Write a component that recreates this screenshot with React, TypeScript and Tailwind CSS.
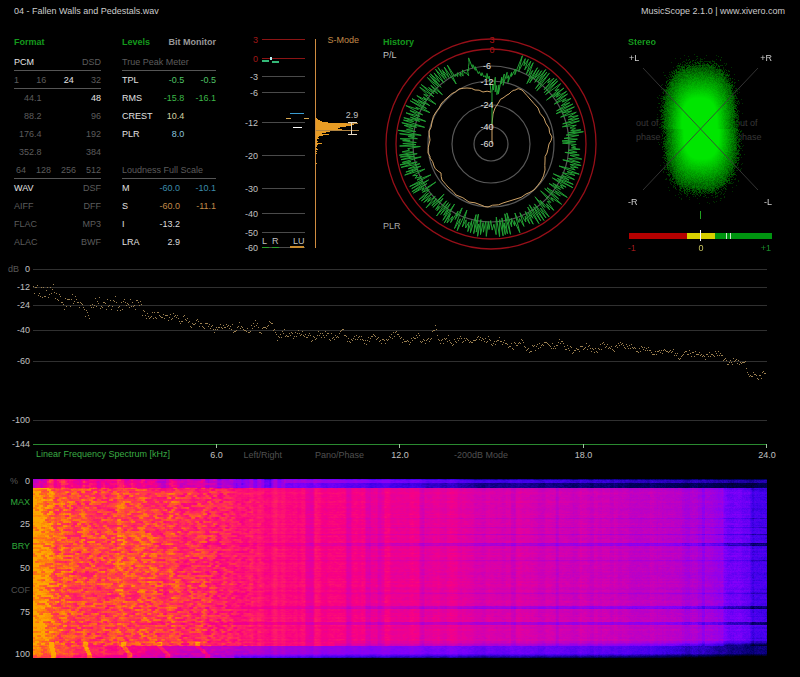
import React, { useEffect, useRef } from "react";
import clsx from "clsx";

type Point = [number, number];

// Small seeded generator so every render draws the same trace.
const createRandom = (seed: number) => () => {
  seed = (seed * 1664525 + 1013904223) >>> 0;
  return seed / 4294967296;
};

const interpolate = (points: Point[], x: number) => {
  if (x <= points[0][0]) return points[0][1];
  for (let i = 1; i < points.length; i++) {
    const [x1, y1] = points[i];
    if (x <= x1) {
      const [x0, y0] = points[i - 1];
      return y0 + ((x - x0) / (x1 - x0)) * (y1 - y0);
    }
  }
  return points[points.length - 1][1];
};

const Heading: React.FC<{ children: React.ReactNode }> = ({ children }) => (
  <h2 className="font-bold leading-[21px] text-[#149a1c]">{children}</h2>
);

/* ---------- Format ---------- */

const formatRows: { items: string[]; active?: string; className?: string }[] = [
  { items: ["PCM", "DSD"], active: "PCM", className: "border-b border-[#555]" },
  {
    items: ["1", "16", "24", "32"],
    active: "24",
    className: "border-b border-[#555]",
  },
  { items: ["44.1", "48"], active: "48", className: "pl-[10px]" },
  { items: ["88.2", "96"], className: "pl-[10px]" },
  { items: ["176.4", "192"], className: "pl-[5px]" },
  { items: ["352.8", "384"], className: "pl-[5px]" },
  {
    items: ["64", "128", "256", "512"],
    className: "pl-[2px] border-b border-[#555]",
  },
  { items: ["WAV", "DSF"], active: "WAV" },
  { items: ["AIFF", "DFF"] },
  { items: ["FLAC", "MP3"] },
  { items: ["ALAC", "BWF"] },
];

const FormatPanel = () => (
  <section className="w-[87px]">
    <Heading>Format</Heading>
    {formatRows.map((row) => (
      <div
        key={row.items[0]}
        className={clsx("flex h-[18px] justify-between", row.className)}
      >
        {row.items.map((item) => (
          <span
            key={item}
            className={clsx(
              "leading-[18px]",
              item === row.active ? "text-[#e4e4e4]" : "text-[#5c5c5c]"
            )}
          >
            {item}
          </span>
        ))}
      </div>
    ))}
  </section>
);

/* ---------- Levels ---------- */

type Level = { label: string; values: string[]; color: string };

const peakLevels: Level[] = [
  { label: "TPL", values: ["-0.5", "-0.5"], color: "text-[#4fc467]" },
  { label: "RMS", values: ["-15.8", "-16.1"], color: "text-[#3cb848]" },
  { label: "CREST", values: ["10.4", ""], color: "text-[#d2d2a0]" },
  { label: "PLR", values: ["8.0", ""], color: "text-[#8cc4dc]" },
];

const loudnessLevels: Level[] = [
  { label: "M", values: ["-60.0", "-10.1"], color: "text-[#3c8cac]" },
  { label: "S", values: ["-60.0", "-11.1"], color: "text-[#c08a48]" },
  { label: "I", values: ["-13.2", ""], color: "text-[#dcdcdc]" },
  { label: "LRA", values: ["2.9", ""], color: "text-[#dcdcdc]" },
];

const LevelTable: React.FC<{ title: string; levels: Level[] }> = ({
  title,
  levels,
}) => (
  <table className="w-full border-collapse">
    <caption className="h-[18px] border-b border-[#555] text-left leading-[18px] text-[#5c5c5c]">
      {title}
    </caption>
    <tbody>
      {levels.map(({ label, values, color }) => (
        <tr key={label} className="h-[18px] leading-[18px]">
          <th scope="row" className="p-0 text-left font-normal text-[#e0e0e0]">
            {label}
          </th>
          {values.map((value, i) => (
            <td key={i} className={clsx("w-[36px] p-0 text-right", color)}>
              {value}
            </td>
          ))}
        </tr>
      ))}
    </tbody>
  </table>
);

const LevelsPanel = () => (
  <section className="w-[94px]">
    <div className="flex justify-between">
      <Heading>Levels</Heading>
      <button
        type="button"
        className="font-bold leading-[21px] text-[#989898]"
      >
        Bit Monitor
      </button>
    </div>
    <LevelTable title="True Peak Meter" levels={peakLevels} />
    <div className="h-[18px]" />
    <LevelTable title="Loudness Full Scale" levels={loudnessLevels} />
  </section>
);

/* ---------- Meter ---------- */

const meterScale: [string, number][] = [
  ["3", 7],
  ["0", 26],
  ["-3", 44],
  ["-6", 60],
  ["-12", 90],
  ["-20", 123],
  ["-30", 156],
  ["-40", 181],
  ["-50", 200],
  ["-60", 215],
];

// One entry per pixel row, starting at y = 86.
const histogram = [
  1, 2, 4, 6, 12, 32, 38, 35, 30, 24, 22, 26, 18, 14, 10, 6, 13, 7, 3, 2, 3, 1,
  1, 2, 1, 6, 2, 1, 1, 0, 1, 2, 0, 1, 0, 1, 0, 0, 0, 0, 0, 0, 0, 0, 0, 1,
];

const MeterPanel = () => (
  <section className="grid w-[125px]">
    <svg viewBox="0 0 125 220" className="w-full [grid-area:1/1]">
      <g shapeRendering="crispEdges">
        {meterScale.map(([label, y], i) => (
          <rect
            key={label}
            x="25"
            y={y}
            width="43"
            height="1"
            fill={i < 2 ? "#8c1414" : "#4a4a4a"}
          />
        ))}
        <rect x="25" y="28" width="7" height="2" fill="#34b878" />
        <rect x="35" y="29" width="7" height="2" fill="#34b878" />
        <rect x="33" y="25" width="2" height="3" fill="#b8f0f0" />
        <rect x="53" y="81" width="14" height="1" fill="#3a9cd0" />
        <rect x="49" y="86" width="5" height="1" fill="#d8a850" />
        <rect x="67" y="86" width="5" height="1" fill="#d8a850" />
        <rect x="56" y="95" width="9" height="1" fill="#fff" />
        <rect x="25" y="215" width="7" height="1" fill="#28a028" />
        <rect x="35" y="215" width="7" height="1" fill="#28a028" />
        <rect x="53" y="214" width="14" height="2" fill="#c88c30" />
        <rect x="78" y="7" width="1" height="209" fill="#d08c40" />
        {histogram.map((width, i) => (
          <rect
            key={i}
            x="79"
            y={86 + i}
            width={width}
            height="1"
            fill="#e89c24"
          />
        ))}
        <rect x="79" y="98" width="43" height="1" fill="#b08440" />
        <rect x="110" y="91" width="11" height="1" fill="#b08440" />
        <path
          d="M110.5 90.5h9M110.5 102.5h9M114.5 90.5v12"
          stroke="#e8dcc8"
          fill="none"
        />
      </g>
      <g fontSize="9" fill="#c0c0c0">
        {meterScale.map(([label, y], i) => (
          <text
            key={label}
            x="21"
            y={y + 4}
            textAnchor="end"
            fill={i < 2 ? "#a01818" : undefined}
          >
            {label}
          </text>
        ))}
        <text x="25" y="212">L</text>
        <text x="35" y="212">R</text>
        <text x="56" y="212">LU</text>
        <text x="115" y="86" textAnchor="middle">2.9</text>
      </g>
    </svg>
    <button
      type="button"
      className="mr-[3px] h-[17px] self-start justify-self-end leading-[17px] text-[#c08848] [grid-area:1/1]"
    >
      S-Mode
    </button>
  </section>
);

/* ---------- History ---------- */

const CX = 108;
const CY = 112;

const historyRings = [
  { label: "3", r: 105, y: 8 },
  { label: "0", r: 95, y: 18 },
  { label: "-6", r: 78, y: 34 },
  { label: "-12", r: 63, y: 50 },
  { label: "-24", r: 39, y: 73 },
  { label: "-40", r: 17, y: 95 },
  { label: "-60", r: 0, y: 112 },
];

const polar = (deg: number, r: number) => {
  const a = (deg * Math.PI) / 180;
  return `${(CX + r * Math.sin(a)).toFixed(1)} ${(CY - r * Math.cos(a)).toFixed(1)}`;
};

const peakEnvelope: Point[] = [
  [0, 50],
  [2, 58],
  [8, 58],
  [12, 66],
  [16, 72],
  [19, 78],
  [20, 90],
  [25, 84],
  [90, 84],
  [130, 82],
  [180, 84],
  [230, 82],
  [243, 78],
  [250, 84],
  [300, 81],
  [328, 84],
  [334, 77],
  [342, 75],
  [344, 80],
  [345, 89],
  [347, 78],
  [353, 70],
  [359, 65],
];

const buildPeakTrace = () => {
  const random = createRandom(42);
  const points: string[] = [`M${CX + 1} 92L${CX + 1} 62`];
  let i = 0;
  for (let deg = 1; deg < 359; deg += 0.5 + random() * 0.8) {
    const swing = deg > 333 ? 4 : deg < 18 ? 9 : 14;
    const side = i++ % 2 ? 1 : -1;
    const r = interpolate(peakEnvelope, deg) + side * random() * swing;
    points.push(`L${polar(deg, Math.min(r, 94 - random() * 3))}`);
  }
  return points.join("") + `L${CX} 60`;
};

const loudnessPoints: Point[] = [
  [109, 112], [109, 92], [110, 82], [112, 76], [116, 70], [120, 66], [126, 62],
  [131, 58], [134, 57], [139, 58], [147, 67], [155, 76], [161, 86], [166, 96],
  [169, 105], [166, 112], [164, 121], [162, 129], [162, 138], [158, 149],
  [151, 158], [143, 162], [133, 167], [120, 171], [113, 173], [105, 175],
  [98, 173], [86, 170], [73, 163], [65, 155], [59, 148], [58, 141], [55, 139],
  [51, 134], [47, 126], [45, 121], [47, 108], [46, 99], [49, 90], [53, 80],
  [58, 72], [64, 66], [70, 61], [76, 57], [84, 56], [92, 58], [100, 60],
  [108, 60],
];

const buildLoudnessTrace = () => {
  const random = createRandom(9);
  return loudnessPoints
    .map(([x, y], i) => {
      if (!i) return `M${x} ${y}`;
      const [px, py] = loudnessPoints[i - 1];
      const mx = (x + px) / 2 + (i > 4 ? random() * 2 - 1 : 0);
      const my = (y + py) / 2 + (i > 4 ? random() * 2 - 1 : 0);
      return `L${mx.toFixed(1)} ${my.toFixed(1)}L${x} ${y}`;
    })
    .join("");
};

const HistoryPanel = () => (
  <section className="grid w-[224px]">
    <svg viewBox="0 0 224 220" className="w-full [grid-area:1/1]">
      {historyRings.map(({ label, r }, i) => (
        <circle
          key={label}
          cx={CX}
          cy={CY}
          r={r}
          fill="none"
          stroke={i < 2 ? "#960f18" : "#585858"}
          strokeWidth={i < 2 ? 1.3 : 1.2}
        />
      ))}
      <path
        d={buildLoudnessTrace()}
        fill="none"
        stroke="#d0a468"
        strokeLinejoin="round"
      />
      <path d={buildPeakTrace()} fill="none" stroke="#22a034" />
      <g fontSize="9" textAnchor="middle">
        {historyRings.map(({ label, y }, i) => (
          <text
            key={label}
            x={label.length > 1 ? 104 : 109}
            y={y + 3}
            fill={i < 2 ? "#b01414" : "#e0e0e0"}
          >
            {label}
          </text>
        ))}
      </g>
    </svg>
    <div className="flex flex-col items-start justify-between pb-[17px] [grid-area:1/1]">
      <div>
        <Heading>History</Heading>
        <button type="button" className="block leading-[4px] text-[#c0c0c0]">
          P/L
        </button>
      </div>
      <button type="button" className="leading-[18px] text-[#a8a8a8]">
        PLR
      </button>
    </div>
  </section>
);

/* ---------- Stereo ---------- */

const drawCloud = (canvas: HTMLCanvasElement) => {
  const ctx = canvas.getContext("2d");
  if (!ctx) return;
  const { width, height } = canvas;
  const random = createRandom(7);
  const image = ctx.createImageData(width, height);
  for (let y = 0; y < height; y++) {
    for (let x = 0; x < width; x++) {
      const dx = Math.abs(x - 72 - (y < 97 ? -1 : 1)) / 40;
      const dy = Math.abs(y - 96) / 69;
      const d = Math.pow(Math.pow(dx, 2.8) + Math.pow(dy, 2.8), 1 / 2.8);
      const density = Math.max(0, Math.min(1, (1.02 - d) / 0.58));
      const grain = density + (random() - 0.5) * 0.35 * (1 - density);
      const lit = random() < density * 4 + (d < 1.1 ? 0.06 : 0);
      const value = lit ? Math.max(0.2, Math.pow(Math.max(grain, 0), 0.7)) : 0;
      const i = (y * width + x) * 4;
      image.data[i + 1] = value * 230;
      image.data[i + 3] = lit ? 255 : d < 0.95 ? 200 : 0;
    }
  }
  ctx.putImageData(image, 0, 0);
};

const StereoPanel = () => {
  const ref = useRef<HTMLCanvasElement>(null);

  useEffect(() => {
    if (ref.current) drawCloud(ref.current);
  }, []);

  return (
    <section className="grid w-[144px]">
      <svg viewBox="0 0 144 220" className="w-full [grid-area:1/1]">
        <g fontSize="9" fill="#383838">
          <text x="8" y="94">out of</text>
          <text x="8" y="108">phase</text>
          <text x="107" y="94">out of</text>
          <text x="109" y="108">phase</text>
        </g>
      </svg>
      <canvas
        ref={ref}
        width={144}
        height={220}
        className="w-full [grid-area:1/1]"
      />
      <svg viewBox="0 0 144 220" className="w-full [grid-area:1/1]">
        <path
          d="M15 36L130 158M130 36L15 158"
          stroke="#3c3c3c"
          strokeOpacity="0.85"
        />
        <g shapeRendering="crispEdges">
          <rect x="72" y="179" width="1" height="8" fill="#20a020" />
          <rect x="1" y="201" width="58" height="6" fill="#b40000" />
          <rect x="59" y="201" width="28" height="6" fill="#d8d000" />
          <rect x="87" y="201" width="57" height="6" fill="#009410" />
          <rect x="72" y="198" width="1" height="11" fill="#fff" />
          <rect x="98" y="201" width="1" height="6" fill="#c8e8c8" />
          <rect x="102" y="201" width="1" height="6" fill="#c8e8c8" />
        </g>
        <g fontSize="9" fill="#d0d0d0">
          <text x="1" y="29">+L</text>
          <text x="144" y="29" textAnchor="end">+R</text>
          <text x="0" y="173">-R</text>
          <text x="144" y="173" textAnchor="end">-L</text>
          <text x="0" y="219" fill="#a01818">-1</text>
          <text x="73" y="219" textAnchor="middle" fill="#c8c460">0</text>
          <text x="143" y="219" textAnchor="end" fill="#188c28">+1</text>
        </g>
      </svg>
      <div className="[grid-area:1/1]">
        <Heading>Stereo</Heading>
      </div>
    </section>
  );
};

/* ---------- Frequency spectrum ---------- */

const spectrumScale: [string, number][] = [
  ["0", 7],
  ["-12", 25],
  ["-24", 43],
  ["-40", 68],
  ["-60", 99],
  ["-100", 158],
  ["-144", 182],
];

const spectrumProfile: Point[] = [
  [0, 30], [2, 23], [8, 30], [17, 30], [20, 25], [25, 38], [33, 41], [41, 36],
  [47, 45], [56, 50], [62, 39], [73, 42], [82, 40], [87, 46], [97, 38],
  [108, 46], [113, 55], [127, 51], [133, 56], [138, 54], [147, 57], [152, 56],
  [158, 65], [163, 59], [170, 63], [183, 66], [192, 64], [200, 66], [210, 63],
  [215, 69], [222, 60], [228, 70], [238, 61], [244, 75], [250, 70], [260, 72],
  [270, 70], [278, 76], [288, 71], [303, 76], [309, 66], [315, 79], [322, 75],
  [333, 79], [339, 73], [350, 80], [358, 74], [363, 71], [373, 82], [385, 73],
  [388, 80], [397, 76], [402, 66], [407, 80], [415, 76], [417, 82], [427, 76],
  [440, 80], [445, 75], [452, 79], [455, 75], [460, 82], [465, 76], [470, 80],
  [480, 84], [488, 79], [495, 88], [510, 81], [523, 84], [526, 79], [532, 84],
  [540, 89], [553, 84], [563, 88], [570, 83], [580, 88], [585, 82], [597, 84],
  [603, 88], [615, 86], [622, 92], [635, 87], [647, 95], [653, 91], [667, 91],
  [670, 95], [678, 91], [687, 91], [695, 101], [700, 99], [712, 100],
  [715, 111], [727, 115], [730, 111], [733, 113],
];

const buildSpectrum = () => {
  const random = createRandom(2024);
  let d = "";
  for (let x = 0; x < 733; x++) {
    const spread = x < 110 ? 13 : x < 300 ? 8 : 6;
    const y = interpolate(spectrumProfile, x) + (random() - 0.5) * spread;
    d += `M${x} ${Math.round(y)}.5h1`;
  }
  return d;
};

const modeButton = "text-[#505050]";

const SpectrumPanel = () => (
  <section className="mt-[10px]">
    <div className="flex">
      <svg viewBox="0 0 33 186" className="w-[33px] shrink-0">
        <g fontSize="9" fill="#c0c0c0">
          <text x="8" y="10" fill="#585858">dB</text>
          {spectrumScale.map(([label, y]) => (
            <text key={label} x="30" y={y + 3} textAnchor="end">
              {label}
            </text>
          ))}
        </g>
      </svg>
      <svg
        viewBox="0 0 734 186"
        preserveAspectRatio="none"
        className="h-[186px] min-w-0 flex-1"
        shapeRendering="crispEdges"
      >
        {spectrumScale.map(([label, y]) => (
          <rect
            key={label}
            y={y}
            width="734"
            height="1"
            fill={label === "-144" ? "#2a8a30" : "#303030"}
          />
        ))}
        {[183, 366, 550, 733].map((x) => (
          <rect key={x} x={x} y="182" width="1" height="4" fill="#a0c0a0" />
        ))}
        <path d={buildSpectrum()} stroke="#9c8050" fill="none" />
      </svg>
    </div>
    <div className="ml-[33px] grid grid-cols-4 leading-3">
      <div className="flex justify-between pl-[3px]">
        <h2 className="text-[#3aac44]">Linear Frequency Spectrum [kHz]</h2>
        <span className="translate-x-1/2 pt-px text-[#c0c0c0]">6.0</span>
      </div>
      <div className="flex justify-between pl-[27px]">
        <div className="flex gap-[33px]">
          <button type="button" className={modeButton}>
            Left/Right
          </button>
          <button type="button" className={modeButton}>
            Pano/Phase
          </button>
        </div>
        <span className="translate-x-1/2 pt-px text-[#c0c0c0]">12.0</span>
      </div>
      <div className="flex justify-between pl-[54px]">
        <button type="button" className={modeButton}>
          -200dB Mode
        </button>
        <span className="translate-x-1/2 pt-px text-[#c0c0c0]">18.0</span>
      </div>
      <div className="flex justify-end">
        <span className="translate-x-1/2 pt-px text-[#c0c0c0]">24.0</span>
      </div>
    </div>
  </section>
);

/* ---------- Spectrogram ---------- */

const heatStops: [number, number, number, number][] = [
  [0, 0, 0, 0],
  [0.12, 0, 0, 100],
  [0.26, 64, 0, 235],
  [0.38, 130, 0, 250],
  [0.5, 180, 0, 205],
  [0.6, 216, 0, 172],
  [0.7, 248, 0, 132],
  [0.78, 255, 30, 104],
  [0.86, 255, 78, 52],
  [0.93, 255, 128, 10],
  [1, 255, 168, 0],
];

const heat = (t: number): [number, number, number] => {
  const v = Math.max(0, Math.min(1, t));
  let i = 1;
  while (i < heatStops.length - 1 && v > heatStops[i][0]) i++;
  const a = heatStops[i - 1];
  const b = heatStops[i];
  const k = (v - a[0]) / (b[0] - a[0]);
  return [
    a[1] + (b[1] - a[1]) * k,
    a[2] + (b[2] - a[2]) * k,
    a[3] + (b[3] - a[3]) * k,
  ];
};

const bodyProfile: Point[] = [
  [0, 0.98], [8, 0.97], [14, 0.94], [24, 0.87], [60, 0.84], [130, 0.83],
  [170, 0.78], [220, 0.75], [270, 0.72], [330, 0.69], [400, 0.65], [470, 0.61],
  [520, 0.58], [580, 0.56], [640, 0.52], [668, 0.46], [688, 0.44],
  [690, 0.37], [715, 0.34], [718, 0.27], [733, 0.23],
];
const introProfile: Point[] = [
  [0, 0.5], [8, 0.62], [14, 0.78], [80, 0.7], [150, 0.6], [200, 0.45],
  [270, 0.36], [350, 0.28], [450, 0.17], [733, 0.08],
];
const outroProfile: Point[] = [
  [0, 0.92], [30, 0.87], [70, 0.78], [110, 0.68], [150, 0.58], [220, 0.5],
  [300, 0.42], [450, 0.35], [600, 0.3], [733, 0.12],
];

const darkColumns: Point[] = [
  [276, 5], [315, 3], [334, 3], [347, 4], [388, 3], [479, 3], [523, 2],
  [669, 2],
];
const darkRows: [number, number, number][] = [
  [39, 1, 0.06], [48, 1, 0.04], [55, 1, 0.08], [64, 3, 0.13], [81, 1, 0.05],
  [114, 1, 0.07], [127, 3, 0.15], [143, 3, 0.12],
];
// Sliding tones in the fade-out: start column, then drift per row.
const slides: Point[] = [
  [18, 0.3], [52, 0.5], [90, 0.8], [126, 1], [164, 1.2],
];

const drawSpectrogram = (canvas: HTMLCanvasElement) => {
  const ctx = canvas.getContext("2d");
  if (!ctx) return;
  const { width, height } = canvas;
  const random = createRandom(1234);
  const noise = (length: number) =>
    Array.from({ length }, () => random() - 0.5);
  const image = ctx.createImageData(width, height);
  const columns = noise(width);
  const rows = noise(height);
  // Bass content is coarser: 4x2 cells instead of single pixels.
  const cells = noise(200 * 100);

  for (let y = 0; y < height; y++) {
    for (let x = 0; x < width; x++) {
      const cell = cells[(y >> 1) * 200 + ((x + (y & 2)) >> 2)];
      const bass = x < 180 ? 1 : x < 240 ? 1 - (x - 180) / 70 : 0.14;
      const column = (columns[x - (x % 4)] + columns[x - (x % 7)]) / 2;
      let t: number;

      if (y < 9) {
        t = interpolate(introProfile, x) + cell * 0.12 * bass;
        t += column * (x < 260 ? 0.2 : 0.05);
        if (y < 4 && x > 250) t += 0.1;
        if (y === 0) t -= 0.08;
      } else if (y > 166) {
        t = interpolate(outroProfile, x) + cell * 0.1 * bass + column * 0.05;
        t -= Math.max(0, y - 174) * (x > 200 ? 0.05 : 0.02);
      } else {
        t = interpolate(bodyProfile, x) + cell * 0.17 * bass;
        t += column * (x < 20 ? 0.03 : 0.07) + rows[y] * 0.035;
        if (y > 55 && y < 116 && x > 60 && x < 130) t += 0.02;
        if (y > 161 && x > 300) t -= 0.04 * (y - 161) * (x / width);
        if (y < 11 && x > 60) t -= 0.04;
        for (const [cx, w] of darkColumns) {
          if (Math.abs(x - cx) < w) t -= 0.06;
        }
        const reach = Math.max(0, Math.min(1, (x - 100) / 350));
        for (const [ry, h, depth] of darkRows) {
          if (y >= ry && y < ry + h) t -= depth * reach;
        }
      }

      if (y > 162) {
        for (const [cx, drift] of slides) {
          const bend = cx + Math.min(8, Math.max(0, y - 167)) * drift;
          if (Math.abs(x - bend) < 2.5) t += 0.16;
        }
      }
      t += (random() - 0.5) * 0.035;

      const i = (y * width + x) * 4;
      const [r, g, b] = heat(t);
      image.data[i] = r;
      image.data[i + 1] = g;
      image.data[i + 2] = b;
      image.data[i + 3] = 255;
    }
  }
  ctx.putImageData(image, 0, 0);
};

const SpectrogramPanel = () => {
  const ref = useRef<HTMLCanvasElement>(null);

  useEffect(() => {
    if (ref.current) drawSpectrogram(ref.current);
  }, []);

  return (
    <section className="mt-[10px] flex">
      <div className="flex w-[33px] shrink-0 flex-col items-end pr-[3px] leading-[22px] text-[#c0c0c0]">
        <div className="flex w-full justify-between pl-[10px] leading-[20px]">
          <span className="text-[#585858]">%</span>
          <span>0</span>
        </div>
        <button type="button" className="text-[#2fa83a]">
          MAX
        </button>
        <span>25</span>
        <button type="button" className="text-[#2fa83a]">
          BRY
        </button>
        <span>50</span>
        <button type="button" className="text-[#505050]">
          COF
        </button>
        <span>75</span>
        <span className="mt-5">100</span>
      </div>
      <div className="min-w-0 flex-1 pt-[8px]">
        <canvas
          ref={ref}
          width={733}
          height={179}
          className="h-[179px] w-full"
        />
      </div>
    </section>
  );
};

export default function App() {
  return (
    <main className="min-h-screen bg-black font-['Liberation_Sans',Arial,sans-serif] text-[9px] leading-[18px]">
      <header className="flex justify-between pt-[2px] pr-[15px] pl-[14px] text-[#cccccc]">
        <h1>04 - Fallen Walls and Pedestals.wav</h1>
        <p>
          MusicScope 2.1.0 | <a href="#xivero">www.xivero.com</a>
        </p>
      </header>
      <div className="mt-3 flex justify-between pr-[28px] pl-[14px]">
        <FormatPanel />
        <LevelsPanel />
        <MeterPanel />
        <HistoryPanel />
        <StereoPanel />
      </div>
      <div className="pr-[33px]">
        <SpectrumPanel />
        <SpectrogramPanel />
      </div>
    </main>
  );
}
